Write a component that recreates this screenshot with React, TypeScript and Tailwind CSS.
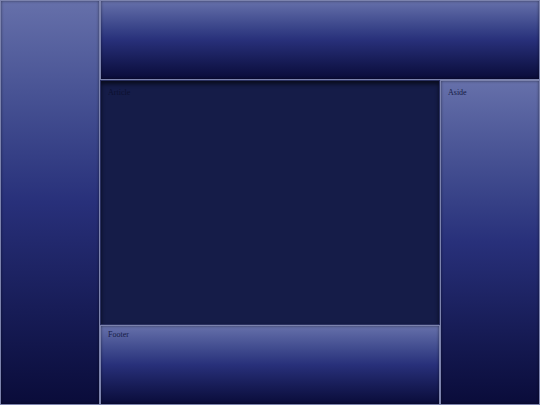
export default function App() {
  const panel =
    "border border-[#7c83ad] shadow-[inset_0_0_3px_rgba(0,0,0,0.5)] bg-gradient-to-b from-[#6670aa] via-[#28307a] to-[#0a0c3a]";
  return (
    <div
      className="w-[540px] h-[405px] grid grid-cols-[100px_1fr_100px] grid-rows-[80px_1fr_80px] bg-[#0a0d3a] text-[8px] text-[#161c45]"
      style={{ fontFamily: '"Liberation Serif", serif' }}
    >
      <nav className={`${panel} row-span-3`}></nav>
      <header className={`${panel} col-span-2`}></header>
      <article className="bg-[#151c48] border border-[#2a3060] shadow-[inset_0_3px_4px_rgba(0,0,0,0.6)] px-[7px] py-[6px] text-[#0c1030]">
        Article
      </article>
      <aside className={`${panel} row-span-2 px-[7px] py-[6px]`}>Aside</aside>
      <footer className={`${panel} px-[7px] py-[3px]`}>Footer</footer>
    </div>
  );
}
